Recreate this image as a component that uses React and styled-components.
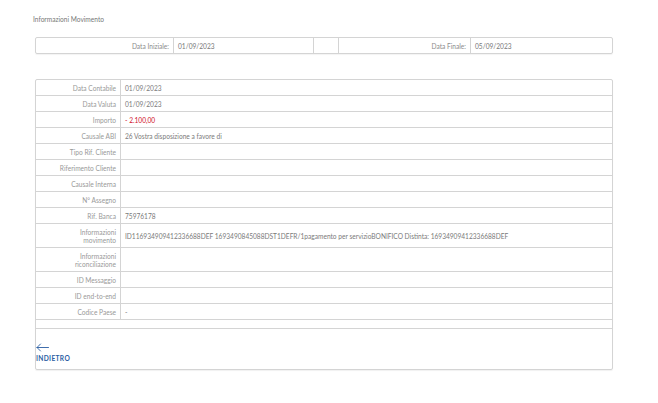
import styled, { createGlobalStyle } from "styled-components";

const GlobalStyle = createGlobalStyle`
  html, body {
    margin: 0;
    padding: 0;
    background: #fff;
  }
  body {
    font-family: Lato, "Open Sans", sans-serif;
    color: #777;
  }
`;

const rows = [
  { label: "Data Contabile", value: "01/09/2023" },
  { label: "Data Valuta", value: "01/09/2023" },
  { label: "Importo", value: "- 2.100,00", negative: true },
  { label: "Causale ABI", value: "26 Vostra disposizione a favore di" },
  { label: "Tipo Rif. Cliente", value: "" },
  { label: "Riferimento Cliente", value: "" },
  { label: "Causale Interna", value: "" },
  { label: "N° Assegno", value: "" },
  { label: "Rif. Banca", value: "75976178" },
  {
    label: "Informazioni movimento",
    value:
      "ID116934909412336688DEF 1693490845088DST1DEFR/1pagamento per servizioBONIFICO Distinta: 16934909412336688DEF",
    tall: true,
  },
  { label: "Informazioni riconciliazione", value: "", tall: true },
  { label: "ID Messaggio", value: "" },
  { label: "ID end-to-end", value: "" },
  { label: "Codice Paese", value: "-" },
];

const App = () => {
  return (
    <Page>
      <GlobalStyle />
      <Title>Informazioni Movimento</Title>
      <FilterBox>
        <FilterLabel>Data Iniziale:</FilterLabel>
        <FilterValue>01/09/2023</FilterValue>
        <FilterSpacer />
        <FilterLabel>Data Finale:</FilterLabel>
        <FilterValue last>05/09/2023</FilterValue>
      </FilterBox>
      <DetailTable>
        {rows.map((row) => (
          <Row key={row.label} tall={row.tall}>
            <Label tall={row.tall}>{row.label}</Label>
            <Value negative={row.negative}>{row.value}</Value>
          </Row>
        ))}
        <EmptyRow />
        <Footer>
          <BackButton>
            <svg width="13" height="9" viewBox="0 0 13 9" fill="none">
              <path
                d="M12.5 4.5H1M4.5 1L1 4.5L4.5 8"
                stroke="#2a5da3"
                strokeWidth="0.9"
                strokeLinecap="round"
                strokeLinejoin="round"
              />
            </svg>
            <span>INDIETRO</span>
          </BackButton>
        </Footer>
      </DetailTable>
    </Page>
  );
};

const Page = styled.div`
  padding: 14px 45px 36px 35px;
`;

const Title = styled.div`
  font-size: 6.6px;
  line-height: 10px;
  color: #777;
  margin-left: -2px;
`;

const FilterBox = styled.div`
  margin-top: 13px;
  display: grid;
  grid-template-columns: 138px 140px 25px 132px 1fr;
  height: 17px;
  box-sizing: border-box;
  border: 1px solid #d4d4d4;
  border-radius: 2px;
  box-shadow: 0 1px 1px rgba(0, 0, 0, 0.05);
`;

const FilterLabel = styled.div`
  display: flex;
  align-items: center;
  justify-content: flex-end;
  padding-right: 4px;
  font-size: 6.6px;
  color: #8c8c8c;
  border-right: 1px solid #d4d4d4;
`;

const FilterValue = styled.div`
  display: flex;
  align-items: center;
  padding-left: 4px;
  font-size: 6.6px;
  color: #777;
  border-right: ${(p) => (p.last ? "none" : "1px solid #d4d4d4")};
`;

const FilterSpacer = styled.div`
  border-right: 1px solid #d4d4d4;
`;

const DetailTable = styled.div`
  margin-top: 25px;
  border: 1px solid #d4d4d4;
  border-radius: 2px;
  box-shadow: 0 1px 1px rgba(0, 0, 0, 0.06);
`;

const Row = styled.div`
  display: grid;
  grid-template-columns: 85px 1fr;
  height: ${(p) => (p.tall ? "23px" : "15px")};
  border-bottom: 1px solid #d4d4d4;
`;

const Label = styled.div`
  display: flex;
  align-items: center;
  justify-content: flex-end;
  text-align: right;
  padding: 0 4px 0 2px;
  font-size: 6.6px;
  line-height: 8px;
  color: #999;
  border-right: 1px solid #d4d4d4;
  white-space: ${(p) => (p.tall ? "normal" : "nowrap")};
  word-spacing: ${(p) => (p.tall ? "30px" : "normal")};
  box-sizing: border-box;
`;

const Value = styled.div`
  display: flex;
  align-items: center;
  padding-left: 4px;
  font-size: 6.6px;
  white-space: nowrap;
  color: ${(p) => (p.negative ? "#d0102a" : "#7a7a7a")};
`;

const EmptyRow = styled.div`
  height: 8px;
  border-bottom: 1px solid #d4d4d4;
`;

const Footer = styled.div`
  height: 40px;
  padding: 14px 0 0 0;
  box-sizing: border-box;
`;

const BackButton = styled.div`
  display: flex;
  flex-direction: column;
  align-items: flex-start;
  gap: 2px;
  svg {
    display: block;
  }
  span {
    font-size: 6.6px;
    font-weight: 700;
    color: #2a5da3;
    letter-spacing: 0.35px;
  }
`;

export default App;
